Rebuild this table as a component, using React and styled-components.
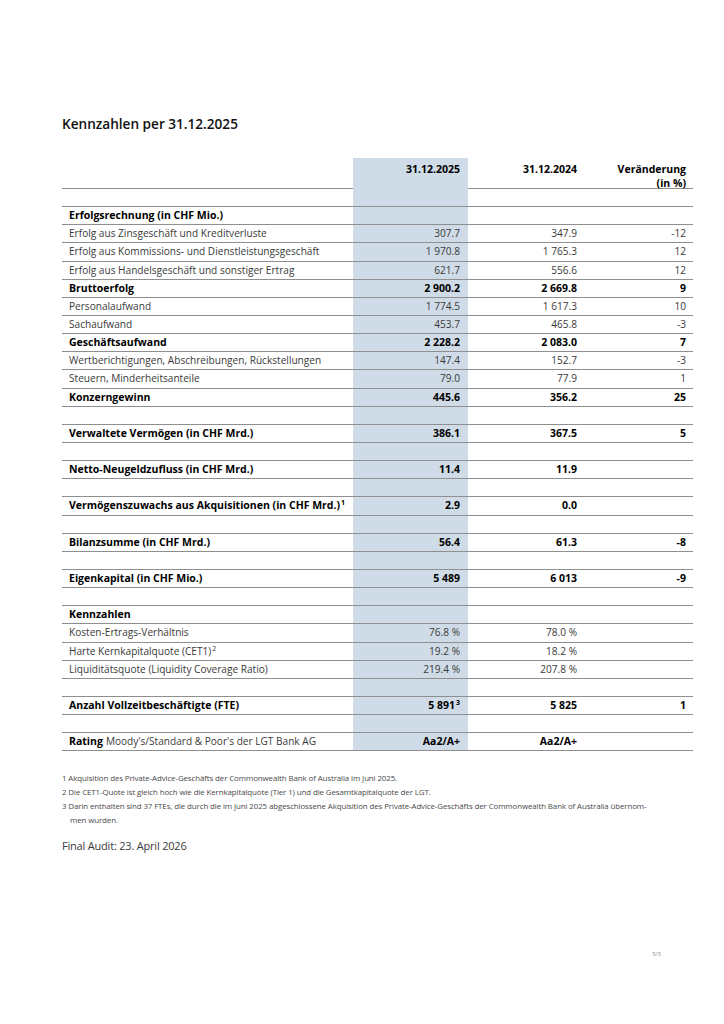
import React from 'react'
import styled, { createGlobalStyle } from 'styled-components'

const GlobalStyle = createGlobalStyle`
  html, body {
    margin: 0;
    padding: 0;
    background: #ffffff;
  }
  body {
    font-family: "Open Sans", "Noto Sans", sans-serif;
    color: #333333;
  }
`

const Page = styled.div`
  width: 724px;
  height: 1024px;
  box-sizing: border-box;
  padding: 115px 31px 0 62px;
  display: flex;
  flex-direction: column;
`

const Title = styled.h1`
  margin: 0 0 25px;
  font-size: 13.6px;
  line-height: 18px;
  font-weight: 600;
  color: #111111;
`

const Table = styled.div`
  width: 631px;
  display: flex;
  flex-direction: column;
`

const Row = styled.div`
  display: grid;
  grid-template-columns: 291px 115px 117px 108px;
  height: ${p => (p.$header ? '31px' : '18.15px')};
  box-sizing: border-box;
  border-bottom: 1px solid #8f8f8f;
  font-size: ${p => (p.$bold ? '10.5px' : '10.1px')};
  line-height: 17px;
  font-weight: ${p => (p.$bold ? 700 : 400)};
  color: ${p => (p.$bold ? '#000000' : '#3a3a3a')};
`

const Label = styled.div`
  padding-left: 7px;
  white-space: nowrap;
`

const Value = styled.div`
  text-align: right;
  padding: ${p => (p.$top ? '4px' : '0')} ${p => p.$pad}px 0 0;
  line-height: ${p => (p.$top ? '14px' : '17px')};
  white-space: nowrap;
  background: ${p => (p.$shaded ? '#cfdbe6' : 'transparent')};
`

const Strong = styled.span`
  font-weight: 700;
  font-size: 10.5px;
  color: #000000;
  margin-right: ${p => (p.$gap ? '3px' : '0')};
`

const Sup = styled.sup`
  font-size: 7px;
  line-height: 0;
  vertical-align: 4px;
  margin-left: 1px;
`

const Notes = styled.div`
  margin-top: 20px;
  display: flex;
  flex-direction: column;
  font-size: 7.9px;
  line-height: 14px;
  color: #4a4a4a;
  letter-spacing: -0.1px;
`

const Note = styled.div`
  padding-left: 8px;
  text-indent: -8px;
  white-space: nowrap;
`

const Audit = styled.div`
  margin-top: 11px;
  font-size: 11px;
  line-height: 16px;
  color: #3a3a3a;
  letter-spacing: -0.2px;
`

const PageNo = styled.div`
  margin-top: 96px;
  align-self: flex-end;
  margin-right: 32px;
  font-size: 6px;
  color: #8a8a8a;
`

const sp = '\u00A0'

const rows = [
  { t: 'blank' },
  { t: 'section', l: 'Erfolgsrechnung (in CHF Mio.)' },
  { l: 'Erfolg aus Zinsgeschäft und Kreditverluste', v: ['307.7', '347.9', '-12'] },
  { l: 'Erfolg aus Kommissions- und Dienstleistungsgeschäft', v: [`1${sp}970.8`, `1${sp}765.3`, '12'] },
  { l: 'Erfolg aus Handelsgeschäft und sonstiger Ertrag', v: ['621.7', '556.6', '12'] },
  { t: 'bold', l: 'Bruttoerfolg', v: [`2${sp}900.2`, `2${sp}669.8`, '9'] },
  { l: 'Personalaufwand', v: [`1${sp}774.5`, `1${sp}617.3`, '10'] },
  { l: 'Sachaufwand', v: ['453.7', '465.8', '-3'] },
  { t: 'bold', l: 'Geschäftsaufwand', v: [`2${sp}228.2`, `2${sp}083.0`, '7'] },
  { l: 'Wertberichtigungen, Abschreibungen, Rückstellungen', v: ['147.4', '152.7', '-3'] },
  { l: 'Steuern, Minderheitsanteile', v: ['79.0', '77.9', '1'] },
  { t: 'bold', l: 'Konzerngewinn', v: ['445.6', '356.2', '25'] },
  { t: 'blank' },
  { t: 'bold', l: 'Verwaltete Vermögen (in CHF Mrd.)', v: ['386.1', '367.5', '5'] },
  { t: 'blank' },
  { t: 'bold', l: 'Netto-Neugeldzufluss (in CHF Mrd.)', v: ['11.4', '11.9', ''] },
  { t: 'blank' },
  { t: 'bold', l: 'Vermögenszuwachs aus Akquisitionen (in CHF Mrd.)', sup: '1', v: ['2.9', '0.0', ''] },
  { t: 'blank' },
  { t: 'bold', l: 'Bilanzsumme (in CHF Mrd.)', v: ['56.4', '61.3', '-8'] },
  { t: 'blank' },
  { t: 'bold', l: 'Eigenkapital (in CHF Mio.)', v: [`5${sp}489`, `6${sp}013`, '-9'] },
  { t: 'blank' },
  { t: 'section', l: 'Kennzahlen' },
  { l: 'Kosten-Ertrags-Verhältnis', v: [`76.8${sp}%`, `78.0${sp}%`, ''] },
  { l: 'Harte Kernkapitalquote (CET1)', sup: '2', v: [`19.2${sp}%`, `18.2${sp}%`, ''] },
  { l: 'Liquiditätsquote (Liquidity Coverage Ratio)', v: [`219.4${sp}%`, `207.8${sp}%`, ''] },
  { t: 'blank' },
  { t: 'bold', l: 'Anzahl Vollzeitbeschäftigte (FTE)', v: [`5${sp}891`, `5${sp}825`, '1'], vsup: '3' },
  { t: 'blank' },
  { t: 'rating', v: ['Aa2/A+', 'Aa2/A+', ''] },
]

const pads = [8, 8, 7]

const Cells = ({ v = ['', '', ''], vsup }) => (
  <>
    {v.map((x, i) => (
      <Value key={i} $shaded={i === 0} $pad={pads[i]}>
        {x}
        {i === 0 && vsup && <Sup>{vsup}</Sup>}
      </Value>
    ))}
  </>
)

const TableRow = ({ row }) => {
  if (row.t === 'rating') {
    return (
      <Row>
        <Label>
          <Strong $gap>Rating</Strong>Moody's/Standard &amp; Poor's der LGT Bank AG
        </Label>
        {row.v.map((x, i) => (
          <Value key={i} $shaded={i === 0} $pad={pads[i]}>
            <Strong>{x}</Strong>
          </Value>
        ))}
      </Row>
    )
  }
  const bold = row.t === 'bold' || row.t === 'section'
  return (
    <Row $bold={bold}>
      <Label>
        {row.l}
        {row.sup && <Sup>{row.sup}</Sup>}
      </Label>
      <Cells v={row.v} vsup={row.vsup} />
    </Row>
  )
}

const App = () => (
  <Page>
    <GlobalStyle />
    <Title>Kennzahlen per 31.12.2025</Title>
    <Table>
      <Row $header $bold>
        <Label />
        <Value $shaded $top $pad={8}>31.12.2025</Value>
        <Value $top $pad={8}>31.12.2024</Value>
        <Value $top $pad={7}>
          Veränderung
          <br />
          (in %)
        </Value>
      </Row>
      {rows.map((row, i) => (
        <TableRow key={i} row={row} />
      ))}
    </Table>
    <Notes>
      <Note>1 Akquisition des Private-Advice-Geschäfts der Commonwealth Bank of Australia im Juni 2025.</Note>
      <Note>2 Die CET1-Quote ist gleich hoch wie die Kernkapitalquote (Tier 1) und die Gesamtkapitalquote der LGT.</Note>
      <Note>
        3 Darin enthalten sind 37 FTEs, die durch die im Juni 2025 abgeschlossene Akquisition des Private-Advice-Geschäfts der Commonwealth Bank of Australia übernom-
        <br />
        men wurden.
      </Note>
    </Notes>
    <Audit>Final Audit: 23. April 2026</Audit>
    <PageNo>3/3</PageNo>
  </Page>
)

export default App
